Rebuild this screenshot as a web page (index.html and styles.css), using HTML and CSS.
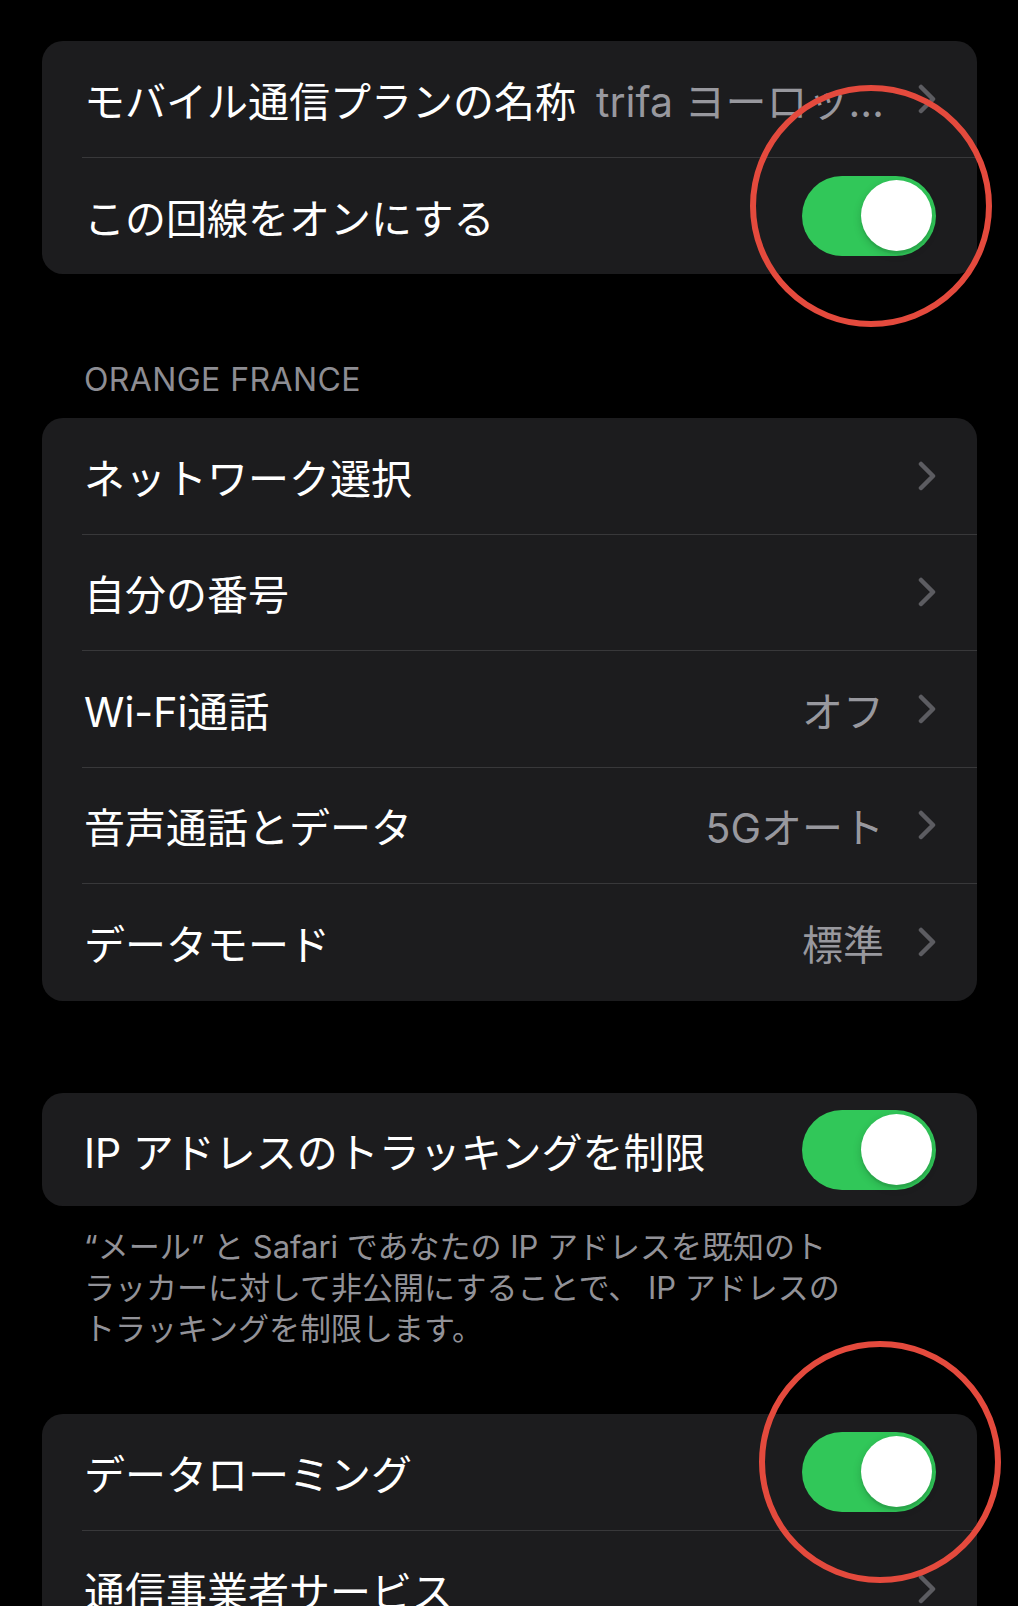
FILE: index.html
```html
<!DOCTYPE html>
<html lang="ja">
<head>
  <meta charset="UTF-8">
  <meta name="viewport" content="width=device-width, initial-scale=1.0">
  <link rel="stylesheet" href="styles.css">
  <title>モバイル通信</title>
</head>
<body>
  <div class="screen">

    <div class="group">
      <div class="row">
        <span class="label">モバイル通信プランの名称</span>
        <span class="value">trifa ヨーロッ…</span>
        <svg class="chevron" viewBox="0 0 18 30"><polyline points="3,3 15,15 3,27" /></svg>
      </div>
      <div class="row">
        <span class="label">この回線をオンにする</span>
        <span class="switch"><span class="knob"></span></span>
      </div>
    </div>

    <div class="section-title">ORANGE FRANCE</div>

    <div class="group group-carrier">
      <div class="row">
        <span class="label">ネットワーク選択</span>
        <svg class="chevron" viewBox="0 0 18 30"><polyline points="3,3 15,15 3,27" /></svg>
      </div>
      <div class="row">
        <span class="label">自分の番号</span>
        <svg class="chevron" viewBox="0 0 18 30"><polyline points="3,3 15,15 3,27" /></svg>
      </div>
      <div class="row">
        <span class="label">Wi-Fi通話</span>
        <span class="value">オフ</span>
        <svg class="chevron" viewBox="0 0 18 30"><polyline points="3,3 15,15 3,27" /></svg>
      </div>
      <div class="row">
        <span class="label">音声通話とデータ</span>
        <span class="value">5Gオート</span>
        <svg class="chevron" viewBox="0 0 18 30"><polyline points="3,3 15,15 3,27" /></svg>
      </div>
      <div class="row">
        <span class="label">データモード</span>
        <span class="value">標準</span>
        <svg class="chevron" viewBox="0 0 18 30"><polyline points="3,3 15,15 3,27" /></svg>
      </div>
    </div>

    <div class="group group-ip">
      <div class="row row-single">
        <span class="label">IP アドレスのトラッキングを制限</span>
        <span class="switch"><span class="knob"></span></span>
      </div>
    </div>

    <p class="footnote">“メール” と Safari であなたの IP アドレスを既知のト<br>ラッカーに対して非公開にすることで、 IP アドレスの<br>トラッキングを制限します。</p>

    <div class="group group-roaming">
      <div class="row">
        <span class="label">データローミング</span>
        <span class="switch"><span class="knob"></span></span>
      </div>
      <div class="row">
        <span class="label">通信事業者サービス</span>
        <svg class="chevron" viewBox="0 0 18 30"><polyline points="3,3 15,15 3,27" /></svg>
      </div>
    </div>

    <span class="mark mark-top"></span>
    <span class="mark mark-bottom"></span>
  </div>
</body>
</html>
```

FILE: styles.css
```css
html, body{
  margin:0; padding:0; background:#000;
  height:1606px; overflow:hidden;
}

.screen{
  position:relative;
  padding:41px 41px 0 42px;
  font-family:Inter, "Noto Sans CJK JP", sans-serif;
  color:#fff;
}

.group{
  background:#1c1c1e; border-radius:21px;
  overflow:hidden;
}

.row{
  display:flex; align-items:center;
  height:116.5px; box-sizing:border-box;
  margin-left:40px; padding-right:41px;
  border-bottom:1px solid #38383a;
  font-size:41px;
}
.row:last-child{
  border-bottom:none;
}
.row-single{
  height:113px;
}

.label{
  padding-left:2px;
  white-space:nowrap;
}

.value{
  margin-left:auto; margin-right:34px;
  color:#98989e; white-space:nowrap;
}

.chevron{
  width:18px; height:30px; margin-left:auto; flex:none;
  fill:none; stroke:#5c5c61; stroke-width:4.5; stroke-linecap:round; stroke-linejoin:round;
}
.value + .chevron{
  margin-left:0;
}

.switch{
  margin-left:auto; flex:none;
  width:134px; height:80px; border-radius:40px;
  background:#31c759; box-sizing:border-box;
  display:flex; justify-content:flex-end; align-items:center;
  padding:0 4px;
}
.knob{
  width:71px; height:71px; border-radius:50%;
  background:#fff;
  box-shadow:0 3px 8px rgba(0,0,0,0.18), 0 3px 1px rgba(0,0,0,0.06);
}

.section-title{
  margin:87px 0 19px 42px;
  font-size:32px; line-height:38px; letter-spacing:0.4px;
  color:#8d8d93;
}

.group-ip{
  margin-top:92.5px;
}

.footnote{
  margin:19.5px 0 0 42px;
  font-size:31px; line-height:41px;
  color:#929298;
}

.group-roaming{
  margin-top:65.5px;
}

/* red hand-drawn marks over the switches */
.mark{
  position:absolute; box-sizing:border-box;
  width:242px; height:242px; border-radius:50%;
  border:6px solid #e44a3d;
}
.mark-top{
  left:750px; top:85px;
}
.mark-bottom{
  left:759px; top:1341px;
}
```
